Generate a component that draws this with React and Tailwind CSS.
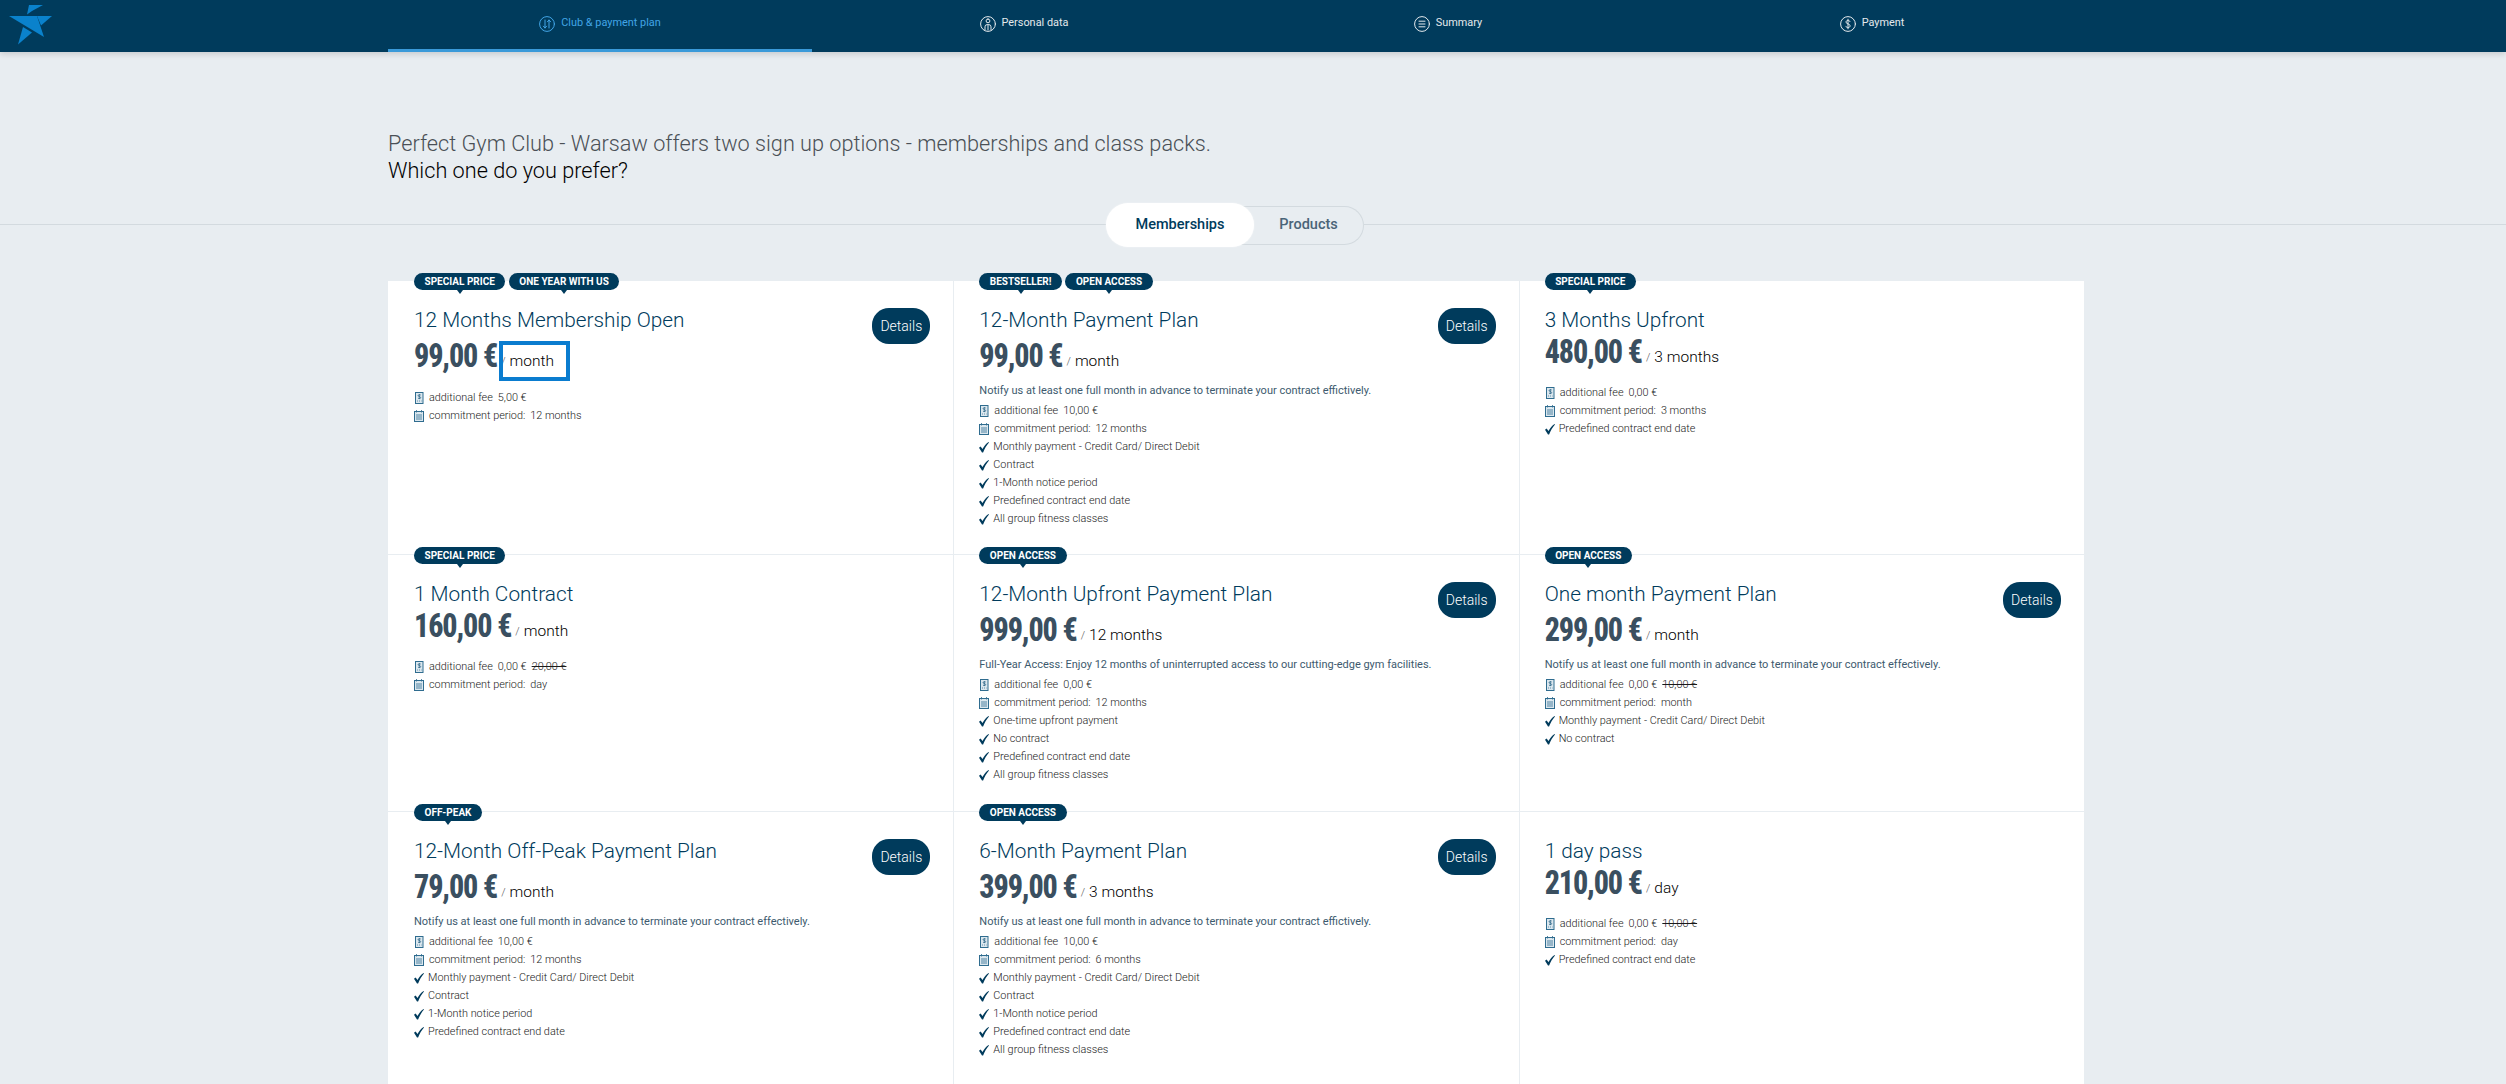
import React from "react";

const plans = [
  { title: "12 Months Membership Open", price: "99,00 €", per: "month", badges: ["SPECIAL PRICE", "ONE YEAR WITH US"], details: true, fee: "5,00 €", period: "12 months", focus: true, checks: [] },
  { title: "12-Month Payment Plan", price: "99,00 €", per: "month", badges: ["BESTSELLER!", "OPEN ACCESS"], details: true, note: "Notify us at least one full month in advance to terminate your contract effictively.", fee: "10,00 €", period: "12 months", checks: ["Monthly payment - Credit Card/ Direct Debit", "Contract", "1-Month notice period", "Predefined contract end date", "All group fitness classes"] },
  { title: "3 Months Upfront", price: "480,00 €", per: "3 months", badges: ["SPECIAL PRICE"], fee: "0,00 €", period: "3 months", checks: ["Predefined contract end date"] },
  { title: "1 Month Contract", price: "160,00 €", per: "month", badges: ["SPECIAL PRICE"], fee: "0,00 €", old: "20,00 €", period: "day", checks: [] },
  { title: "12-Month Upfront Payment Plan", price: "999,00 €", per: "12 months", badges: ["OPEN ACCESS"], details: true, note: "Full-Year Access: Enjoy 12 months of uninterrupted access to our cutting-edge gym facilities.", fee: "0,00 €", period: "12 months", checks: ["One-time upfront payment", "No contract", "Predefined contract end date", "All group fitness classes"] },
  { title: "One month Payment Plan", price: "299,00 €", per: "month", badges: ["OPEN ACCESS"], details: true, note: "Notify us at least one full month in advance to terminate your contract effectively.", fee: "0,00 €", old: "10,00 €", period: "month", checks: ["Monthly payment - Credit Card/ Direct Debit", "No contract"] },
  { title: "12-Month Off-Peak Payment Plan", price: "79,00 €", per: "month", badges: ["OFF-PEAK"], details: true, note: "Notify us at least one full month in advance to terminate your contract effectively.", fee: "10,00 €", period: "12 months", checks: ["Monthly payment - Credit Card/ Direct Debit", "Contract", "1-Month notice period", "Predefined contract end date"] },
  { title: "6-Month Payment Plan", price: "399,00 €", per: "3 months", badges: ["OPEN ACCESS"], details: true, note: "Notify us at least one full month in advance to terminate your contract effictively.", fee: "10,00 €", period: "6 months", checks: ["Monthly payment - Credit Card/ Direct Debit", "Contract", "1-Month notice period", "Predefined contract end date", "All group fitness classes"] },
  { title: "1 day pass", price: "210,00 €", per: "day", badges: [], fee: "0,00 €", old: "10,00 €", period: "day", checks: ["Predefined contract end date"] },
];

function Logo() {
  return (
    <svg width="60" height="50" viewBox="0 0 60 50" className="block">
      <g fill="#0a82cc">
        <polygon points="29,5 43,5 32,11 27,14.5" />
        <polygon points="9,16 37,16 44,37" />
        <polygon points="37,16 52,16 41,25.5" />
        <polygon points="23,27 32,32.5 18,44.5" />
      </g>
    </svg>
  );
}

function NavIcon({ kind, color }) {
  return (
    <svg width="16" height="16" viewBox="0 0 16 16" fill="none" stroke={color} strokeWidth="1" strokeLinecap="round" strokeLinejoin="round" className="shrink-0">
      <circle cx="8" cy="8" r="7.4" />
      {kind === "plan" && <path d="M6 4v8M4.4 10.2 6 12l1.6-1.8M10 12V4M8.4 5.8 10 4l1.6 1.8" />}
      {kind === "person" && <path d="M8 3a1.9 1.9 0 1 1 0 3.8A1.9 1.9 0 0 1 8 3ZM5 14v-3.2A2.2 2.2 0 0 1 7.2 8.6h1.6a2.2 2.2 0 0 1 2.2 2.2V14M8 8.6V14" />}
      {kind === "list" && <path d="M5 5.2h6M5 8h6M5 10.8h6" />}
      {kind === "dollar" && <path d="M10 5.6C9.6 4.8 8.9 4.4 8 4.4c-1.2 0-2 .7-2 1.7 0 2.3 4.1 1.3 4.1 3.7 0 1.1-.9 1.8-2.1 1.8-1 0-1.8-.5-2.2-1.3M8 3.2v9.6" />}
    </svg>
  );
}

const nav = [
  { label: "Club & payment plan", kind: "plan", active: true },
  { label: "Personal data", kind: "person" },
  { label: "Summary", kind: "list" },
  { label: "Payment", kind: "dollar" },
];

function FeeIcon() {
  return (
    <svg width="15" height="12" viewBox="0 0 15 12" className="shrink-0">
      <rect x="1.5" y="0.5" width="7.5" height="11" fill="#dbe7ee" stroke="#2f6c8f" strokeWidth="1" />
      <path d="M6.8 3.2C6.5 2.7 5 2.5 4.4 3c-.7.6-.2 1.3 1 1.6 1.2.3 1.7 1 1 1.7-.6.5-2.1.3-2.4-.3M5.3 2.2v4.8" fill="none" stroke="#1d5a7e" strokeWidth=".7" />
      <path d="M3 9h1M5 9h1M7 9h.6" stroke="#2f6c8f" strokeWidth=".7" />
    </svg>
  );
}

function CalIcon() {
  return (
    <svg width="15" height="12" viewBox="0 0 15 12" className="shrink-0">
      <rect x="0.5" y="1.5" width="9" height="10" fill="#dbe7ee" stroke="#2f6c8f" strokeWidth="1" />
      <path d="M2.5 0v2.5M7.5 0v2.5M3 4v6M5 4v6M7 4v6" stroke="#2f6c8f" strokeWidth=".8" />
    </svg>
  );
}

function Check() {
  return (
    <svg width="14" height="11" viewBox="0 0 14 11" className="shrink-0">
      <path d="M0 5.8 1.6 4.6 3.5 7C5 4.2 7.2 1.6 9.6 0l.4.4C7.6 3 5.6 6.6 4.1 10.6H3Z" fill="#003b5c" />
    </svg>
  );
}

function Card({ plan, index }) {
  const col = index % 3;
  const row = Math.floor(index / 3);
  const cell = [
    "relative bg-white pt-[27px] pr-[23px]",
    col === 0 ? "pl-[26px]" : "pl-[25px] border-l border-l-[#e8edf1]",
    row > 0 ? "border-t border-t-[#e8edf1]" : "",
  ].join(" ");
  let listGap = "mt-[16px]";
  if (plan.details && !plan.note) listGap = "mt-[17px]";
  if (plan.note) listGap = "mt-0";
  return (
    <div className={cell}>
      {plan.badges.length > 0 && (
        <div className={`absolute -top-2 z-10 flex gap-[3.5px] ${col === 0 ? "left-[26px]" : "left-[25px]"}`}>
          {plan.badges.map((b) => (
            <span key={b} className="relative flex h-[17px] items-center rounded-[9px] bg-[#003b5c] px-[10.5px] text-[10px] font-bold leading-none text-white whitespace-nowrap">
              {b}
              <span className="absolute left-1/2 top-[17px] -ml-[3px] h-0 w-0 border-x-[3px] border-t-[4px] border-x-transparent border-t-[#003b5c]" />
            </span>
          ))}
        </div>
      )}
      <div className="flex items-start justify-between">
        <div>
          <div className="h-6 text-[20.8px] font-light leading-6 text-[#003b5c] whitespace-nowrap">{plan.title}</div>
          <div className={`flex h-8 items-center whitespace-nowrap ${plan.details ? "mt-2" : "mt-1"}`}>
            <span className="inline-block origin-center scale-y-110 text-[30px] font-extrabold leading-8 tracking-[-1.1px] text-[#3a4f60] [font-stretch:75%]">{plan.price}</span>
            <span className="ml-[4px] mt-[12px] text-[11px] font-light leading-4 text-[#555]">/</span>
            <span className="relative ml-[4px] mt-[10px] text-[15.5px] font-light leading-5 text-black">
              {plan.per}
              {plan.focus && <span className="absolute -left-[11px] -right-[16px] -top-[10px] -bottom-[10px] border-4 border-[#0a7ccf]" />}
            </span>
          </div>
        </div>
        {plan.details && (
          <button className="flex h-9 w-[58px] shrink-0 items-center justify-center rounded-[17px] bg-[#003b5c] text-[14px] font-light text-white">Details</button>
        )}
      </div>
      {plan.note && <div className="mt-[10px] h-5 text-[11px] leading-[18px] text-[#3d5a6e] whitespace-nowrap">{plan.note}</div>}
      <div className={`${listGap} text-[10.85px] font-light text-[#1a1a1a]`}>
        <div className="flex h-[18px] items-center">
          <FeeIcon />
          <span>additional fee</span>
          <span className="ml-[5px]">{plan.fee}</span>
          {plan.old && <span className="ml-[5px] line-through">{plan.old}</span>}
        </div>
        <div className="flex h-[18px] items-center">
          <CalIcon />
          <span>commitment period:</span>
          <span className="ml-[5px]">{plan.period}</span>
        </div>
        {plan.checks.map((c) => (
          <div key={c} className="flex h-[18px] items-center">
            <Check />
            <span>{c}</span>
          </div>
        ))}
      </div>
    </div>
  );
}

export default function App() {
  return (
    <div className="relative h-[1084px] overflow-hidden bg-[#e8edf1] font-['Roboto',sans-serif]">
      <header className="relative z-20 h-[52px] bg-[#003b5c] shadow-[0_2px_6px_rgba(0,0,0,0.15)]">
        <div className="absolute left-0 top-0"><Logo /></div>
        <nav className="ml-[388px] grid w-[1696px] grid-cols-4">
          {nav.map((n) => (
            <div key={n.label} className={`flex h-[52px] items-center justify-center gap-[6px] text-[10.9px] ${n.active ? "border-b-[3px] border-[#3a9ad9] pb-[2px] text-[#42a5e6]" : "pb-[5px] text-[#e4e9ec]"}`}>
              <NavIcon kind={n.kind} color={n.active ? "#42a5e6" : "#e4e9ec"} />
              <span>{n.label}</span>
            </div>
          ))}
        </nav>
      </header>

      <div className="ml-[388px] pt-[78px] text-[21.7px] font-light leading-[27px]">
        <div className="text-[#4a5056]">Perfect Gym Club - Warsaw offers two sign up options - memberships and class packs.</div>
        <div className="text-black">Which one do you prefer?</div>
      </div>

      <div className="mt-[19px] flex h-11 items-center">
        <div className="mb-[2px] h-px w-[1106px] bg-[#d3dadf]" />
        <div className="flex items-center">
          <div className="relative z-10 flex h-11 w-[148px] items-center justify-center rounded-[22px] bg-white text-[14.5px] font-medium text-[#003b5c] shadow-[0_0_2px_rgba(255,255,255,0.6)]">Memberships</div>
          <div className="-ml-5 flex h-[39px] w-[130px] items-center justify-center rounded-r-[20px] border border-l-0 border-[#d3dadf] pl-5 text-[14.5px] font-medium text-[#4a6478]">Products</div>
        </div>
        <div className="mb-[2px] h-px flex-1 bg-[#d3dadf]" />
      </div>

      <div className="ml-[388px] mt-[34px] grid w-[1696px] grid-cols-3 grid-rows-[273px_257px_273px]">
        {plans.map((p, i) => (
          <Card key={p.title} plan={p} index={i} />
        ))}
      </div>
    </div>
  );
}
